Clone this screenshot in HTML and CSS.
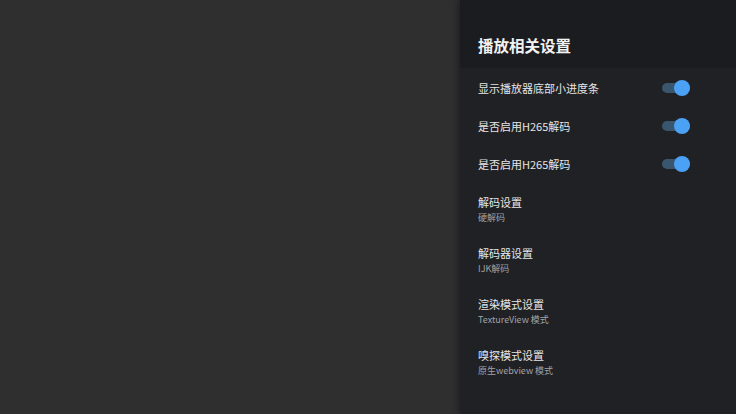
FILE: index.html
```html
<!DOCTYPE html>
<html lang="zh">
<head>
<meta charset="utf-8">
<link rel="stylesheet" href="styles.css">
</head>
<body>
<div class="screen">
  <div class="backdrop"></div>
  <aside class="panel">
    <header class="panel-header"><h1 class="panel-title">播放相关设置</h1></header>
    <ul class="list">
      <li class="row switch-row"><span class="row-title">显示播放器底部小进度条</span><span class="switch"><span class="thumb"></span></span></li>
      <li class="row switch-row"><span class="row-title">是否启用H265解码</span><span class="switch"><span class="thumb"></span></span></li>
      <li class="row switch-row"><span class="row-title">是否启用H265解码</span><span class="switch"><span class="thumb"></span></span></li>
      <li class="row pref-row"><span class="row-title">解码设置</span><span class="row-sub">硬解码</span></li>
      <li class="row pref-row"><span class="row-title">解码器设置</span><span class="row-sub">IJK解码</span></li>
      <li class="row pref-row"><span class="row-title">渲染模式设置</span><span class="row-sub">TextureView 模式</span></li>
      <li class="row pref-row"><span class="row-title">嗅探模式设置</span><span class="row-sub">原生webview 模式</span></li>
    </ul>
  </aside>
</div>
</body>
</html>
```
FILE: styles.css
```css
* { box-sizing: border-box; }
html, body { margin: 0; padding: 0; }
body {
  width: 736px;
  height: 414px;
  overflow: hidden;
  font-family: "Noto Sans CJK SC", "Noto Sans", Roboto, sans-serif;
  background: #303030;
}
.screen {
  display: flex;
  width: 736px;
  height: 414px;
}
.backdrop {
  flex: 1;
  background: #2f2f2f;
}
.panel {
  width: 276px;
  height: 414px;
  background: #202125;
  display: flex;
  flex-direction: column;
  box-shadow: -2px 0 6px rgba(0,0,0,0.35);
}
.panel-header {
  height: 68px;
  background: #1b1c1f;
  padding: 34px 18px 0;
}
.panel-title {
  margin: 0;
  font-size: 15.5px;
  line-height: 22px;
  font-weight: 700;
  color: #f2f2f2;
}
.list {
  list-style: none;
  margin: 0;
  padding: 1px 0 0;
}
.row {
  padding: 0 18px;
}
.switch-row {
  height: 38px;
  display: flex;
  align-items: center;
  justify-content: space-between;
  padding-right: 46px;
}
.row-title {
  font-size: 11px;
  line-height: 16px;
  color: #e6e6e6;
}
.switch {
  position: relative;
  width: 28px;
  height: 10px;
  border-radius: 5px;
  background: #3a556e;
}
.thumb {
  position: absolute;
  right: 0;
  top: -3px;
  width: 16px;
  height: 16px;
  border-radius: 50%;
  background: #4ba1f4;
}
.pref-row {
  display: flex;
  flex-direction: column;
  padding-top: 11px;
  padding-bottom: 8px;
  height: 51px;
}
.row-sub {
  font-size: 9px;
  line-height: 16px;
  color: #a3a3a6;
}
```
